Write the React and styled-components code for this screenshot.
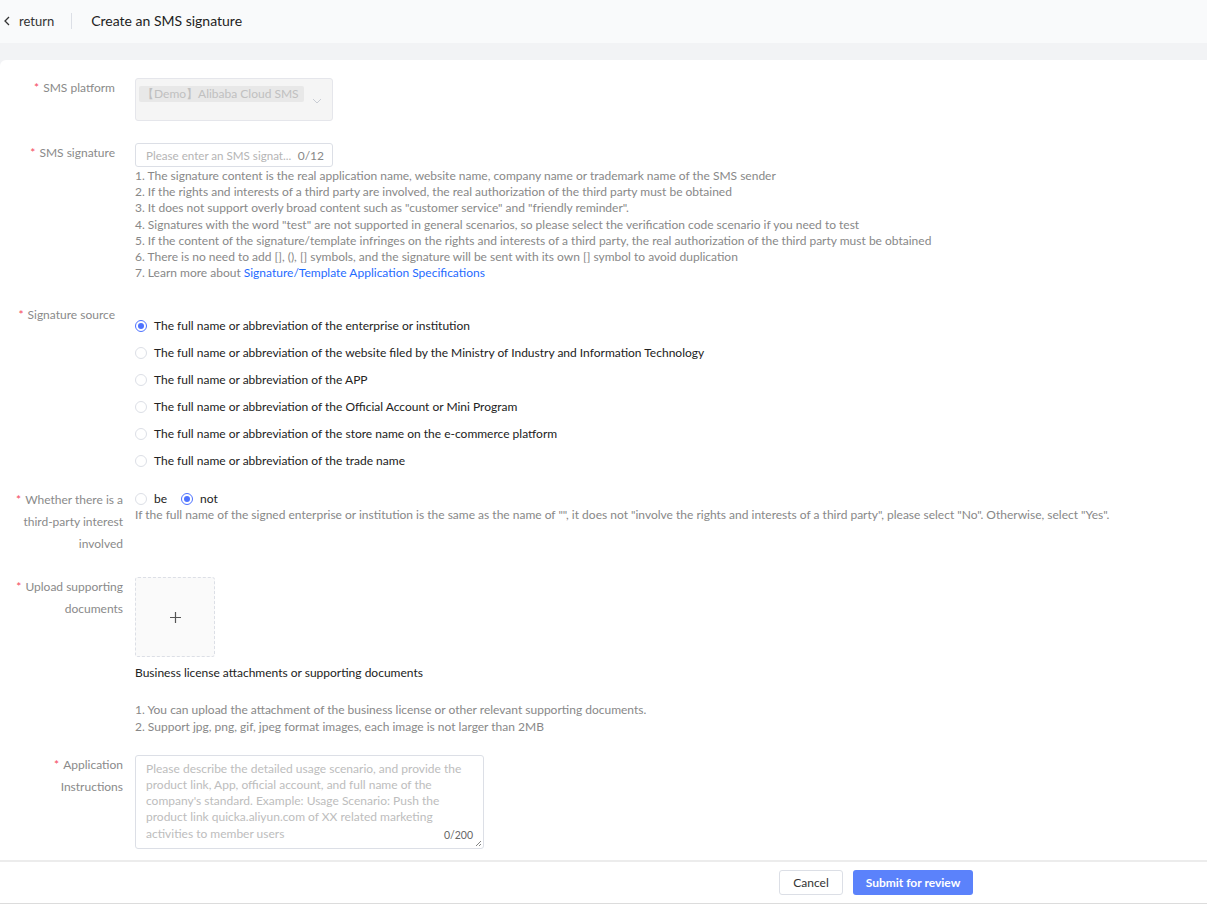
import styled, { createGlobalStyle } from 'styled-components';

const GlobalStyle = createGlobalStyle`
  html, body {
    margin: 0;
    padding: 0;
    background: #f2f3f5;
    font-family: Lato, "Liberation Sans", Arial, sans-serif;
  }
  * { box-sizing: border-box; }
`;

const SOURCES = [
  'The full name or abbreviation of the enterprise or institution',
  'The full name or abbreviation of the website filed by the Ministry of Industry and Information Technology',
  'The full name or abbreviation of the APP',
  'The full name or abbreviation of the Official Account or Mini Program',
  'The full name or abbreviation of the store name on the e-commerce platform',
  'The full name or abbreviation of the trade name',
];

const RULES = [
  '1. The signature content is the real application name, website name, company name or trademark name of the SMS sender',
  '2. If the rights and interests of a third party are involved, the real authorization of the third party must be obtained',
  '3. It does not support overly broad content such as "customer service" and "friendly reminder".',
  '4. Signatures with the word "test" are not supported in general scenarios, so please select the verification code scenario if you need to test',
  '5. If the content of the signature/template infringes on the rights and interests of a third party, the real authorization of the third party must be obtained',
  '6. There is no need to add [], (), [] symbols, and the signature will be sent with its own [] symbol to avoid duplication',
];

const App = () => {
  return (
    <Page>
      <GlobalStyle />
      <Header>
        <Back>
          <svg width="8" height="10" viewBox="0 0 8 10">
            <path d="M6 1 L2 5 L6 9" fill="none" stroke="#333" strokeWidth="1.3" />
          </svg>
          <span>return</span>
        </Back>
        <Divider />
        <Title>Create an SMS signature</Title>
      </Header>

      <Card>
        <Row>
          <Label>SMS platform</Label>
          <Control>
            <Select>
              <Tag>【Demo】Alibaba Cloud SMS</Tag>
              <Chevron width="10" height="6" viewBox="0 0 10 6">
                <path d="M1 1 L5 5 L9 1" fill="none" stroke="#c9cdd4" strokeWidth="1" />
              </Chevron>
            </Select>
          </Control>
        </Row>

        <Row $mt={22}>
          <Label>SMS signature</Label>
          <Control>
            <Input>
              <Placeholder>Please enter an SMS signat...</Placeholder>
              <Count>0/12</Count>
            </Input>
            <HelpList>
              {RULES.map((r) => (
                <div key={r}>{r}</div>
              ))}
              <div>
                7. Learn more about <Link>Signature/Template Application Specifications</Link>
              </div>
            </HelpList>
          </Control>
        </Row>

        <Row $mt={24}>
          <Label>Signature source</Label>
          <Control>
            <RadioStack>
              {SOURCES.map((s, i) => (
                <RadioItem key={s}>
                  <Radio $checked={i === 0} />
                  <span>{s}</span>
                </RadioItem>
              ))}
            </RadioStack>
          </Control>
        </Row>

        <Row $mt={21}>
          <Label $multi>Whether there is a third-party interest involved</Label>
          <Control>
            <InlineRadios>
              <RadioItem>
                <Radio />
                <span>be</span>
              </RadioItem>
              <RadioItem>
                <Radio $checked />
                <span>not</span>
              </RadioItem>
            </InlineRadios>
            <Help>
              If the full name of the signed enterprise or institution is the same as the name of "", it does not "involve the rights and interests of a third party", please select "No". Otherwise, select "Yes".
            </Help>
          </Control>
        </Row>

        <Row $mt={22}>
          <Label $multi>Upload supporting documents</Label>
          <Control>
            <Upload>
              <svg width="11" height="11" viewBox="0 0 11 11">
                <path d="M5.5 0 V11 M0 5.5 H11" stroke="#555" strokeWidth="1.2" />
              </svg>
            </Upload>
            <UploadCaption>Business license attachments or supporting documents</UploadCaption>
            <HelpList $mt={22}>
              <div>1. You can upload the attachment of the business license or other relevant supporting documents.</div>
              <div>2. Support jpg, png, gif, jpeg format images, each image is not larger than 2MB</div>
            </HelpList>
          </Control>
        </Row>

        <Row $mt={20}>
          <Label $multi>Application Instructions</Label>
          <Control>
            <TextArea>
              <AreaText>
                <AreaPlaceholder>
                  Please describe the detailed usage scenario, and provide the product link, App, official account, and full name of the company's standard. Example: Usage Scenario: Push the product link quicka.aliyun.com of XX related marketing activities to member users
                </AreaPlaceholder>
              </AreaText>
              <AreaCount>0/200</AreaCount>
              <Grip width="7" height="7" viewBox="0 0 7 7">
                <path d="M1 6 L6 1 M4 6 L6 4" stroke="#666" strokeWidth="0.8" />
              </Grip>
            </TextArea>
          </Control>
        </Row>
      </Card>

      <Footer>
        <CancelBtn>Cancel</CancelBtn>
        <SubmitBtn>Submit for review</SubmitBtn>
      </Footer>
    </Page>
  );
};

const Page = styled.div`
  display: flex;
  flex-direction: column;
  min-height: 100vh;
  color: #333;
`;

const Header = styled.div`
  height: 43px;
  display: flex;
  align-items: center;
  background: #f9fafb;
  padding-left: 3px;
  padding-bottom: 2px;
`;

const Back = styled.div`
  display: flex;
  align-items: center;
  gap: 8px;
  font-size: 13px;
  color: #333;
`;

const Divider = styled.div`
  width: 1px;
  height: 16px;
  background: #dcdfe6;
  margin: 0 19px 0 17px;
`;

const Title = styled.div`
  font-size: 14px;
  color: #222;
`;

const Card = styled.div`
  margin-top: 17px;
  background: #fff;
  border-top-left-radius: 6px;
  padding: 18px 0 10px;
  flex: 1;
`;

const Row = styled.div`
  display: grid;
  grid-template-columns: 135px 1fr;
  margin-top: ${(p) => p.$mt || 0}px;
`;

const Label = styled.div`
  font-size: 12px;
  color: #8a8a8a;
  text-align: right;
  padding-right: ${(p) => (p.$multi ? 12 : 20)}px;
  padding-left: 14px;
  line-height: ${(p) => (p.$multi ? 22 : 20)}px;
  margin-top: ${(p) => (p.$multi ? -1 : 0)}px;

  &::before {
    content: '*';
    color: #f5475d;
    margin-right: 4px;
  }
`;

const Control = styled.div`
  display: flex;
  flex-direction: column;
  align-items: flex-start;
  min-width: 0;
`;

const Select = styled.div`
  position: relative;
  width: 198px;
  height: 43px;
  background: #f5f5f5;
  border: 1px solid #e5e6eb;
  border-radius: 3px;
  padding: 3px;
`;

const Tag = styled.span`
  display: inline-block;
  background: #e8e8e8;
  color: #c0c0c0;
  font-size: 12px;
  line-height: 16px;
  padding: 0 5px 0 3px;
  border-radius: 2px;
`;

const Chevron = styled.svg`
  position: absolute;
  right: 10px;
  top: 19px;
`;

const Input = styled.div`
  width: 198px;
  height: 24px;
  border: 1px solid #dcdfe6;
  border-radius: 3px;
  display: flex;
  align-items: center;
  justify-content: space-between;
  gap: 2px;
  padding: 0 8px 0 10px;
  font-size: 12px;
  white-space: nowrap;
`;

const Placeholder = styled.span`
  color: #b5b5b5;
  font-size: 11.6px;
`;

const Count = styled.span`
  color: #888;
`;

const HelpList = styled.div`
  margin-top: ${(p) => p.$mt ?? 1}px;
  font-size: 12px;
  line-height: 16.2px;
  color: #888;
`;

const Help = styled.div`
  font-size: 12px;
  line-height: 16px;
  color: #888;
`;

const Link = styled.span`
  color: #1f6bff;
`;

const RadioStack = styled.div`
  display: flex;
  flex-direction: column;
  gap: 11px;
  margin-top: 13px;
`;

const InlineRadios = styled.div`
  display: flex;
  gap: 14px;
  margin-top: 1px;
`;

const RadioItem = styled.label`
  display: flex;
  align-items: center;
  gap: 7px;
  font-size: 12px;
  line-height: 16px;
  color: #222;
`;

const Radio = styled.span`
  width: 12px;
  height: 12px;
  border-radius: 50%;
  border: 1px solid ${(p) => (p.$checked ? '#4d72ff' : '#dcdfe6')};
  background: #fff;
  position: relative;
  flex-shrink: 0;

  &::after {
    content: '';
    display: ${(p) => (p.$checked ? 'block' : 'none')};
    position: absolute;
    left: 2px;
    top: 2px;
    width: 6px;
    height: 6px;
    border-radius: 50%;
    background: #4d72ff;
  }
`;

const Upload = styled.div`
  width: 80px;
  height: 80px;
  border: 1px dashed #dcdfe6;
  border-radius: 3px;
  background: #fafafa;
  display: flex;
  align-items: center;
  justify-content: center;
`;

const UploadCaption = styled.div`
  margin-top: 8px;
  font-size: 12px;
  color: #222;
`;

const TextArea = styled.div`
  position: relative;
  width: 349px;
  height: 94px;
  border: 1px solid #dcdfe6;
  border-radius: 3px;
  padding: 5px 10px;
`;

const AreaText = styled.div`
  width: 320px;
  font-size: 12px;
  line-height: 16.2px;
`;

const AreaPlaceholder = styled.span`
  color: #bdbdbd;
`;

const AreaCount = styled.span`
  position: absolute;
  right: 10px;
  bottom: 7px;
  font-size: 10.5px;
  color: #666;
`;

const Grip = styled.svg`
  position: absolute;
  right: 1px;
  bottom: 1px;
`;

const Footer = styled.div`
  height: 44px;
  background: #fff;
  border-top: 2px solid #ececec;
  border-bottom: 1px solid #dcdcdc;
  display: flex;
  align-items: center;
  gap: 10px;
  padding-left: 779px;
`;

const CancelBtn = styled.button`
  height: 25px;
  width: 64px;
  border: 1px solid #dcdfe6;
  background: #fff;
  border-radius: 3px;
  font-family: inherit;
  font-size: 12px;
  color: #333;
`;

const SubmitBtn = styled.button`
  height: 25px;
  width: 120px;
  border: 0;
  background: #5b82fb;
  border-radius: 3px;
  font-family: inherit;
  font-size: 12px;
  font-weight: bold;
  color: #fff;
`;

export default App;
